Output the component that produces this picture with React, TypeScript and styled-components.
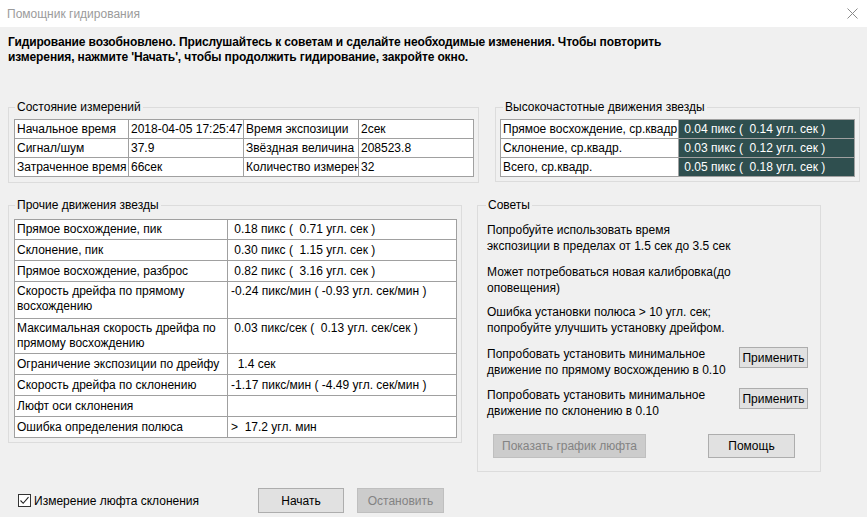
import React from "react";
import styled, { createGlobalStyle } from "styled-components";

const Global = createGlobalStyle`
  html, body { margin: 0; padding: 0; background: #f0f0f0; }
  body {
    font-family: "Liberation Sans", Arial, sans-serif;
    font-size: 12px;
    color: #000;
  }
  * { box-sizing: border-box; }
`;

const Window = styled.div`
  width: 867px;
  height: 517px;
  display: flex;
  flex-direction: column;
  background: #f0f0f0;
  overflow: hidden;
`;

const TitleBar = styled.div`
  flex: none;
  height: 27px;
  background: #ffffff;
  display: flex;
  align-items: center;
  justify-content: space-between;
  padding: 0 9px 0 7px;
`;

const Title = styled.span`
  color: #9b9b9b;
  font-size: 12px;
`;

const Body = styled.div`
  display: flex;
  flex-direction: column;
  padding: 8px 7px 0 8px;
`;

const Intro = styled.p`
  margin: 0;
  font-weight: bold;
  line-height: 15px;
  letter-spacing: -0.12px;
  white-space: nowrap;
`;

const Row = styled.div<{ $mt: number; $gap: number }>`
  display: flex;
  align-items: flex-start;
  gap: ${(p) => p.$gap}px;
  margin-top: ${(p) => p.$mt}px;
`;

const Group = styled.fieldset<{ $w: number; $pad: string }>`
  margin: 0;
  min-width: 0;
  width: ${(p) => p.$w}px;
  border: 1px solid #dcdcdc;
  padding: ${(p) => p.$pad};
`;

const Legend = styled.legend<{ $lx: number }>`
  padding: 0 2px;
  margin-left: ${(p) => p.$lx}px;
  line-height: 16px;
  font-size: 12px;
`;

const Table = styled.div`
  display: flex;
  flex-direction: column;
  border-top: 1px solid #a0a0a0;
  border-left: 1px solid #a0a0a0;
  background: #ffffff;
`;

const TRow = styled.div<{ $cols: string; $h: number }>`
  display: grid;
  grid-template-columns: ${(p) => p.$cols};
  height: ${(p) => p.$h}px;
`;

const Cell = styled.div<{ $dark?: boolean; $top?: boolean; $pl?: number }>`
  border-right: 1px solid #a0a0a0;
  border-bottom: 1px solid #a0a0a0;
  padding-left: ${(p) => p.$pl ?? 2}px;
  padding-top: ${(p) => (p.$top ? 2 : 0)}px;
  display: flex;
  align-items: ${(p) => (p.$top ? "flex-start" : "center")};
  overflow: hidden;
  white-space: pre;
  line-height: 15px;
  background: ${(p) => (p.$dark ? "#2f4f4f" : "#ffffff")};
  color: ${(p) => (p.$dark ? "#ffffff" : "#000000")};
`;

const Tips = styled.div`
  display: flex;
  flex-direction: column;
  padding-top: 9px;
`;

const Tip = styled.p<{ $mt: number }>`
  margin: ${(p) => p.$mt}px 0 0 0;
  line-height: 16px;
  white-space: nowrap;
`;

const TipRow = styled.div<{ $mt: number }>`
  display: flex;
  justify-content: space-between;
  align-items: flex-start;
  margin-top: ${(p) => p.$mt}px;
  line-height: 16px;
  white-space: nowrap;
`;

const Button = styled.button<{ $w: number; $h: number; $mt?: number }>`
  width: ${(p) => p.$w}px;
  height: ${(p) => p.$h}px;
  margin-top: ${(p) => p.$mt ?? 0}px;
  padding: 0;
  font-family: "Liberation Sans", Arial, sans-serif;
  font-size: 12px;
  color: #000;
  background: #e1e1e1;
  border: 1px solid #adadad;
  border-radius: 0;
  flex: none;
  &:disabled {
    background: #cccccc;
    border-color: #bfbfbf;
    color: #838383;
  }
`;

const GroupButtons = styled.div`
  display: flex;
  gap: 62px;
  margin: 15px 0 0 6px;
`;

const BottomBar = styled.div`
  display: grid;
  grid-template-columns: 237px 86px 87px;
  column-gap: 13px;
  align-items: center;
  margin-top: 16px;
`;

const CheckLabel = styled.label`
  display: flex;
  align-items: center;
  gap: 3px;
  padding-left: 10px;
  white-space: nowrap;
`;

const CheckBox = styled.span`
  width: 13px;
  height: 13px;
  border: 1px solid #333333;
  background: #ffffff;
  display: flex;
  align-items: center;
  justify-content: center;
`;

const CloseIcon = () => (
  <svg width="11" height="11" viewBox="0 0 11 11">
    <path d="M0.5 0.5 L10.5 10.5 M10.5 0.5 L0.5 10.5" stroke="#8a8a8a" strokeWidth="1" fill="none" />
  </svg>
);

const state: [string, string, string, string][] = [
  ["Начальное время", "2018-04-05 17:25:47", "Время экспозиции", "2сек"],
  ["Сигнал/шум", "37.9", "Звёздная величина", "208523.8"],
  ["Затраченное время", "66сек", "Количество измерений", "32"],
];

const hf: [string, string][] = [
  ["Прямое восхождение, ср.квадр.", " 0.04 пикс (  0.14 угл. сек )"],
  ["Склонение, ср.квадр.", " 0.03 пикс (  0.12 угл. сек )"],
  ["Всего, ср.квадр.", " 0.05 пикс (  0.18 угл. сек )"],
];

const other: { l: string; v: string; h: number; top?: boolean }[] = [
  { l: "Прямое восхождение, пик", v: " 0.18 пикс (  0.71 угл. сек )", h: 20 },
  { l: "Склонение, пик", v: " 0.30 пикс (  1.15 угл. сек )", h: 21 },
  { l: "Прямое восхождение, разброс", v: " 0.82 пикс (  3.16 угл. сек )", h: 21 },
  { l: "Скорость дрейфа по прямому\nвосхождению", v: "-0.24 пикс/мин ( -0.93 угл. сек/мин )", h: 37, top: true },
  { l: "Максимальная скорость дрейфа по\nпрямому восхождению", v: " 0.03 пикс/сек (  0.13 угл. сек/сек )", h: 35, top: true },
  { l: "Ограничение экспозиции по дрейфу", v: "  1.4 сек", h: 21 },
  { l: "Скорость дрейфа по склонению", v: "-1.17 пикс/мин ( -4.49 угл. сек/мин )", h: 21 },
  { l: "Люфт оси склонения", v: "", h: 21 },
  { l: "Ошибка определения полюса", v: ">  17.2 угл. мин", h: 21 },
];

export default function App() {
  return (
    <Window>
      <Global />
      <TitleBar>
        <Title>Помощник гидирования</Title>
        <CloseIcon />
      </TitleBar>
      <Body>
        <Intro>
          Гидирование возобновлено. Прислушайтесь к советам и сделайте необходимые изменения. Чтобы повторить
          <br />
          измерения, нажмите 'Начать', чтобы продолжить гидирование, закройте окно.
        </Intro>

        <Row $mt={34} $gap={16}>
          <Group $w={471} $pad="4px 4px 5px 5px">
            <Legend $lx={1}>Состояние измерений</Legend>
            <Table>
              {state.map((r, i) => (
                <TRow key={i} $cols="114px 115px 115px 115px" $h={19}>
                  {r.map((c, j) => (
                    <Cell key={j}>{c}</Cell>
                  ))}
                </TRow>
              ))}
            </Table>
          </Group>
          <Group $w={365} $pad="4px 4px 4px 4px">
            <Legend $lx={3}>Высокочастотные движения звезды</Legend>
            <Table>
              {hf.map((r, i) => (
                <TRow key={i} $cols="178px 176px" $h={19}>
                  <Cell>{r[0]}</Cell>
                  <Cell $dark>{r[1]}</Cell>
                </TRow>
              ))}
            </Table>
          </Group>
        </Row>

        <Row $mt={14} $gap={15}>
          <Group $w={454} $pad="6px 4px 4px 5px">
            <Legend $lx={1}>Прочие движения звезды</Legend>
            <Table>
              {other.map((r, i) => (
                <TRow key={i} $cols="213px 229px" $h={r.h}>
                  <Cell $top={r.top}>{r.l}</Cell>
                  <Cell $top={r.top} $pl={3}>{r.v}</Cell>
                </TRow>
              ))}
            </Table>
          </Group>
          <Group $w={344} $pad="0 12px 13px 9px">
            <Legend $lx={-1}>Советы</Legend>
            <Tips>
              <Tip $mt={0}>
                Попробуйте использовать время
                <br />
                экспозиции в пределах от 1.5 сек до 3.5 сек
              </Tip>
              <Tip $mt={10}>
                Может потребоваться новая калибровка(до
                <br />
                оповещения)
              </Tip>
              <Tip $mt={8}>
                Ошибка установки полюса &gt; 10 угл. сек;
                <br />
                попробуйте улучшить установку дрейфом.
              </Tip>
              <TipRow $mt={10}>
                <span>
                  Попробовать установить минимальное
                  <br />
                  движение по прямому восхождению в 0.10
                </span>
                <Button $w={69} $h={21} $mt={1}>Применить</Button>
              </TipRow>
              <TipRow $mt={9}>
                <span>
                  Попробовать установить минимальное
                  <br />
                  движение по склонению в 0.10
                </span>
                <Button $w={69} $h={21} $mt={1}>Применить</Button>
              </TipRow>
            </Tips>
            <GroupButtons>
              <Button $w={153} $h={24} disabled>Показать график люфта</Button>
              <Button $w={87} $h={24}>Помощь</Button>
            </GroupButtons>
          </Group>
        </Row>

        <BottomBar>
          <CheckLabel>
            <CheckBox>
              <svg width="11" height="11" viewBox="0 0 11 11">
                <path d="M1.5 5.5 L4.2 8.3 L9.5 2.2" stroke="#222" strokeWidth="1.1" fill="none" />
              </svg>
            </CheckBox>
            Измерение люфта склонения
          </CheckLabel>
          <Button $w={86} $h={25}>Начать</Button>
          <Button $w={87} $h={25} disabled>Остановить</Button>
        </BottomBar>
      </Body>
    </Window>
  );
}
